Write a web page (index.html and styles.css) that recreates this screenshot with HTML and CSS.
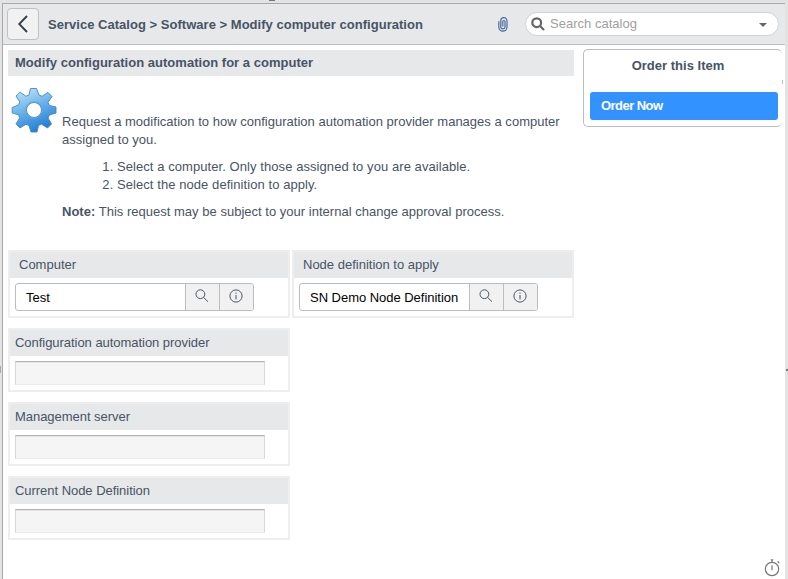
FILE: index.html
```html
<!DOCTYPE html>
<html lang="en">
<head>
<meta charset="utf-8">
<title>Modify computer configuration</title>
<link rel="stylesheet" href="styles.css">
</head>
<body>
<svg width="0" height="0" class="defs">
  <symbol id="lens" viewBox="0 0 14 14"><circle cx="5.4" cy="5.2" r="4.4"/><path d="M8.6 8.4 13 12.7"/></symbol>
  <symbol id="info" viewBox="0 0 14 14"><circle cx="7" cy="7" r="6.1"/><path d="M7 6v4.4M7 3.6v1.2"/></symbol>
</svg>
<i class="speck speck-top"></i><i class="speck speck-left"></i><i class="speck speck-right"></i>
<div class="window">
  <header class="bar">
    <button class="back" aria-label="Back"><svg width="12" height="20" viewBox="0 0 12 20"><path d="M10 2 2.2 10 10 18"/></svg></button>
    <h1 class="crumbs"><span>Service Catalog &gt; Software &gt; Modify computer configuration</span></h1>
    <svg class="clip" width="10" height="15" viewBox="0 0 10 15"><path d="M.8 4.3v5.8a4 4 0 0 0 8.2 0V3.8a3.1 3.1 0 0 0-6.2 0v6a2.1 2.1 0 0 0 4.2 0V4.6a1.1 1.1 0 0 0-2.2 0v5"/></svg>
    <div class="search">
      <svg class="search-icon" width="14" height="14" viewBox="0 0 14 14"><circle cx="5.7" cy="5.7" r="4.4"/><path d="m9 9 4 4"/></svg>
      <span class="search-text">Search catalog</span>
      <i class="caret"></i>
    </div>
  </header>
  <div class="body">
    <main class="main">
      <h2 class="title"><span>Modify configuration automation for a computer</span></h2>
      <section class="intro">
        <svg class="gear" width="46" height="46" viewBox="-23 -23 46 46">
          <defs>
            <linearGradient id="blue" gradientUnits="userSpaceOnUse" x1="-10" y1="-20" x2="8" y2="22"><stop offset="0" stop-color="#b9def5"/><stop offset=".45" stop-color="#63b0ea"/><stop offset="1" stop-color="#1d76d2"/></linearGradient>
          </defs>
          <path class="gear-body" fill-rule="evenodd" d="M-5-15-3.5-21.5 2.5-21.5 5-15 8-13.7 14-17.6 18-13.5 14-7.5 15.5-4.5 22-3 22 3 15.5 5 14 8 17.5 14 13.5 18 7.5 14.2 4.5 15.5 3 22-3 22-5 15.5-8 14.2-14 18-18 13.8-14.2 7.8-15.5 4.8-21.8 3-21.8-2.5-15.5-5-14.2-8-18-14-13.8-17.8-8-13.8ZM7.5 0A7.5 7.5 0 1 0-7.5 0 7.5 7.5 0 1 0 7.5 0Z"/>
          <circle class="gear-ring" r="8.2"/>
        </svg>
        <div class="copy">
          <p><span>Request a modification to how configuration automation provider manages a computer</span><br>assigned to you.</p>
          <ol><li>Select a computer. Only those assigned to you are available.</li><li>Select the node definition to apply.</li></ol>
          <p><b>Note:</b> This request may be subject to your internal change approval process.</p>
        </div>
      </section>
      <div class="fields">
        <div class="field ref">
          <label>Computer</label>
          <div class="group"><span class="value">Test</span><button aria-label="Look up"><svg class="icon"><use href="#lens"/></svg></button><button aria-label="Details"><svg class="icon"><use href="#info"/></svg></button></div>
        </div>
        <div class="field ref">
          <label>Node definition to apply</label>
          <div class="group"><span class="value">SN Demo Node Definition</span><button aria-label="Look up"><svg class="icon"><use href="#lens"/></svg></button><button aria-label="Details"><svg class="icon"><use href="#info"/></svg></button></div>
        </div>
        <div class="field"><label>Configuration automation provider</label><div class="readonly"></div></div>
        <div class="field"><label>Management server</label><div class="readonly"></div></div>
        <div class="field"><label>Current Node Definition</label><div class="readonly"></div></div>
      </div>
    </main>
    <aside class="order">
      <h3>Order this Item</h3>
      <button class="order-now">Order Now</button>
    </aside>
  </div>
  <svg class="timer" width="16" height="18" viewBox="0 0 16 18"><circle cx="8" cy="10" r="6.7"/><path d="M8 6.2v5M8 1v2.3M6.8.9h2.4M13.6 2.4l1.6 1.6"/></svg>
</div>
</body>
</html>
```

FILE: styles.css
```css
* { box-sizing: border-box; }
body {
  margin: 0;
  height: 579px;
  padding: 3px 3px 0 2px;
  overflow: hidden;
  background: #e3e3e3;
  color: #485465;
  font: 13px/18px "Liberation Sans", Arial, sans-serif;
  letter-spacing: .015px;
}
h1, h2, h3, p, ol { margin: 0; font-size: 13px; }
button { font: inherit; letter-spacing: inherit; color: inherit; padding: 0; }
svg { fill: none; stroke: currentColor; display: block; flex: none; }
.defs { position: absolute; }
.speck { position: absolute; background: #777; }
.speck-top { left: 269px; top: 0; width: 6px; height: 1px; }
.speck-left { left: 0; top: 366px; width: 1px; height: 7px; background: #aaa; }
.speck-right { left: 786px; top: 369px; width: 2px; height: 2px; }

.window {
  position: relative;
  height: 576px;
  background: #fff;
  border-top: 1px solid #a9a9a9;
  border-left: 1px solid #a9a9a9;
}
.bar {
  display: flex;
  align-items: center;
  height: 41px;
  padding: 0 6px 0 4px;
  background: #e6e8ea;
  border-bottom: 1px solid #b9bfc4;
}
.back {
  display: flex;
  align-items: center;
  justify-content: center;
  width: 32px;
  height: 32px;
  background: #f1f1f1;
  border: 1px solid #bdc0c4;
  border-radius: 4px;
  color: #343d47;
}
.back svg { stroke-width: 1.8; margin-right: 1px; }
.crumbs { margin-left: 9px; padding-top: 1px; flex: 1; letter-spacing: .025px; }
.clip { margin: 1px 17px 0 0; color: #4a6b9c; stroke-width: 1.2; }
.search {
  display: flex;
  align-items: center;
  width: 254px;
  height: 24px;
  padding: 0 11px 0 5px;
  background: #fff;
  border: 1px solid #d0d2d4;
  border-radius: 12px;
}
.search-icon { color: #666; stroke-width: 2.2; }
.search-text { flex: 1; margin-left: 5px; color: #a0a0a0; }
.caret { border: 4px solid transparent; border-top-color: #666; border-bottom: 0; margin-top: 2px; }

.body { display: flex; align-items: flex-start; gap: 9px; padding: 4px 0 0 5px; }
.main { width: 566px; flex: none; }
.title { height: 26px; margin-top: 1px; padding: 4px 7px; background: #e6e8ea; letter-spacing: .03px; }
.intro { display: flex; height: 174px; padding-left: 3px; }
.gear { margin-top: 11px; stroke: none; }
.gear-body { fill: url(#blue); stroke: #4288bd; stroke-width: .9; stroke-linejoin: round; }
.gear-ring { stroke: #6fa4cb; stroke-width: 1; }
.copy { padding: 37px 0 0 5px; white-space: nowrap; }
ol { margin: 9px 0; padding-left: 55px; letter-spacing: .07px; }

.fields { display: grid; grid-template-columns: 282px 282px; column-gap: 2px; row-gap: 10px; }
.field { grid-column: 1; height: 64px; border: 2px solid #eeeeef; }
.field label { display: block; height: 26px; padding: 4px 5px; background: #e6e8ea; letter-spacing: -.04px; }
.ref { grid-column: auto; height: 68px; }
.ref label { padding-left: 9px; letter-spacing: 0; }
.group {
  display: flex;
  width: 239px;
  height: 28px;
  margin: 5px;
  overflow: hidden;
  border: 1px solid #b9bdc2;
  border-radius: 3px;
}
.value { flex: 1; min-width: 0; padding: 5px 10px; color: #000; white-space: nowrap; letter-spacing: -.03px; }
.group button { display: flex; flex: none; justify-content: center; width: 34px; padding: 5px 1px 0 0; background: #f1f1f1; border: 0; border-left: 1px solid #b9bdc2; }
.icon { width: 14px; height: 14px; }
.readonly {
  width: 250px;
  height: 24px;
  margin: 5px;
  background: #f5f5f5;
  border: 1px solid #d8d8d8;
  border-top-color: #b2b2b2;
  border-bottom-color: #ebebeb;
  box-shadow: inset 0 1px #e5e5e5;
}
.order {
  position: relative;
  width: 199px;
  height: 78px;
  padding: 7px 4px 0 6px;
  border: 1px solid #b9bdc2;
  border-right: 0;
  border-radius: 5px;
}
.order::after { content: ""; position: absolute; right: -1px; top: 30px; width: 1px; height: 4px; background: #b9bdc2; }
.order h3 { margin-right: 12px; text-align: center; }
.order-now {
  display: block;
  width: 188px;
  height: 28px;
  margin-top: 17px;
  padding-left: 11px;
  text-align: left;
  color: #fff;
  font-weight: bold;
  letter-spacing: -.55px;
  background: #3292ff;
  border: 0;
  border-radius: 3px;
}
.timer { position: absolute; right: 5px; bottom: 2px; color: #777; stroke-width: 1.2; }
```
